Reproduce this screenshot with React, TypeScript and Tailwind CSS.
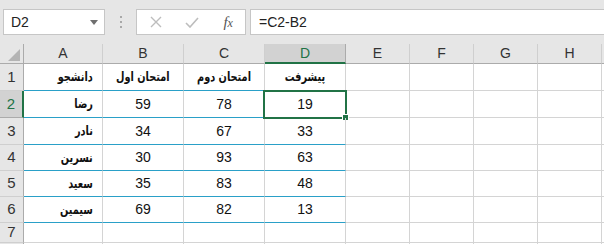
import React from 'react'

const cols = ['A', 'B', 'C', 'D', 'E', 'F', 'G', 'H']

const rows = [
  { n: 1, a: 'دانشجو', b: 'امتحان اول', c: 'امتحان دوم', d: 'پیشرفت', head: true },
  { n: 2, a: 'رضا', b: '59', c: '78', d: '19' },
  { n: 3, a: 'نادر', b: '34', c: '67', d: '33' },
  { n: 4, a: 'نسرین', b: '30', c: '93', d: '63' },
  { n: 5, a: 'سعید', b: '35', c: '83', d: '48' },
  { n: 6, a: 'سیمین', b: '69', c: '82', d: '13' },
]

// the screenshot's Persian face is much narrower than DejaVu, so squeeze it a bit
const arabic = "inline-block font-['DejaVu_Sans',sans-serif] font-bold text-[13px] scale-x-[0.75]"

function Toolbar() {
  return (
    <div className="h-[44px] bg-[#e6e6e6] flex items-start pt-[9px] pl-[3px]">
      {/* name box */}
      <div className="w-[102px] h-[26px] bg-white border border-[#c6c6c6] flex items-center justify-between pl-[7px] pr-[6px]">
        <span className="text-[14px] text-[#222]">D2</span>
        <svg width="8" height="5" viewBox="0 0 8 5">
          <path d="M0 0h8L4 5z" fill="#6f6f6f" />
        </svg>
      </div>
      <div className="w-[31px] h-[26px] flex flex-col items-center justify-center gap-[3px]">
        <div className="w-[2px] h-[2px] bg-[#a8a8a8]" />
        <div className="w-[2px] h-[2px] bg-[#a8a8a8]" />
        <div className="w-[2px] h-[2px] bg-[#a8a8a8]" />
      </div>
      {/* cancel / enter / fx */}
      <div className="w-[110px] h-[26px] bg-white border border-[#c6c6c6] flex items-center">
        <div className="w-[36px] flex justify-center ml-[1px]">
          <svg width="12" height="12" viewBox="0 0 12 12">
            <path d="M1 1l10 10M11 1L1 11" stroke="#bdbdbd" strokeWidth="1.4" />
          </svg>
        </div>
        <div className="w-[38px] flex justify-center">
          <svg width="14" height="11" viewBox="0 0 14 11">
            <path d="M1 6l4 4L13 1" stroke="#bdbdbd" strokeWidth="1.6" fill="none" />
          </svg>
        </div>
        <div className="w-[34px] flex justify-center">
          <span className="font-['Liberation_Serif',serif] italic text-[15px] text-[#555] leading-none">
            f<span className="text-[12px]">x</span>
          </span>
        </div>
      </div>
      {/* formula */}
      <div className="flex-1 ml-[4px] h-[26px] bg-white border border-[#c6c6c6] border-r-0 flex items-center pl-[8px]">
        <span className="text-[14px] text-[#222]">=C2-B2</span>
      </div>
    </div>
  )
}

function Cell({ children, className = '' }: { children?: React.ReactNode; className?: string }) {
  return (
    <div className={`border-r border-b border-[#d4d4d4] flex items-center justify-center text-[14px] text-[#111] ${className}`}>
      {children}
    </div>
  )
}

export default function App() {
  return (
    <div className="w-[604px] h-[244px] overflow-hidden bg-white font-['Liberation_Sans',sans-serif]">
      <Toolbar />
      <div className="grid grid-cols-[24px_79px_81px_81px_81px_64px_64px_64px_64px_1fr] grid-rows-[20px_27px_27px_27px_26px_26px_26px_20px_20px]">
        {/* header row */}
        <div className="relative bg-[#e6e6e6] border-r border-b border-[#ababab]">
          <svg className="absolute right-[3px] bottom-[2px]" width="12" height="12" viewBox="0 0 12 12">
            <path d="M12 0v12H0z" fill="#b4b4b4" />
          </svg>
        </div>
        {cols.map(c =>
          c === 'D' ? (
            <div key={c} className="bg-[#d2d2d2] border-r border-[#ababab] border-b-2 border-b-[#217346] flex items-center justify-center text-[14px] text-[#217346]">
              {c}
            </div>
          ) : (
            <div key={c} className="bg-[#e6e6e6] border-r border-b border-r-[#cfcfcf] border-b-[#ababab] flex items-center justify-center text-[14px] text-[#333]">
              {c}
            </div>
          )
        )}
        <div className="bg-[#e6e6e6] border-b border-[#ababab]" />

        {rows.map(r => (
          <React.Fragment key={r.n}>
            {r.n === 2 ? (
              <div className="bg-[#d2d2d2] border-b border-[#ababab] border-r-2 border-r-[#217346] flex items-center justify-center text-[15px] text-[#217346]">
                {r.n}
              </div>
            ) : (
              <div className="bg-[#e6e6e6] border-r border-b border-r-[#ababab] border-b-[#cfcfcf] flex items-center justify-center text-[15px] text-[#333]">
                {r.n}
              </div>
            )}
            <Cell className="!justify-end pr-[9px] border-b-[#2aa0c8]">
              <span dir="rtl" className={`${arabic} origin-right`}>{r.a}</span>
            </Cell>
            <Cell className="border-b-[#2aa0c8]">
              <span dir={r.head ? 'rtl' : undefined} className={r.head ? arabic : ''}>{r.b}</span>
            </Cell>
            <Cell className="border-b-[#2aa0c8]">
              <span dir={r.head ? 'rtl' : undefined} className={r.head ? arabic : ''}>{r.c}</span>
            </Cell>
            <Cell className="relative border-b-[#2aa0c8]">
              <span dir={r.head ? 'rtl' : undefined} className={r.head ? arabic : ''}>{r.d}</span>
              {r.n === 2 && (
                <>
                  <div className="absolute -left-[2px] -right-[2px] -top-[1px] -bottom-[2px] border-2 border-[#217346]" />
                  <div className="absolute -right-[4px] -bottom-[4px] w-[7px] h-[7px] bg-[#217346] border border-white" />
                </>
              )}
            </Cell>
            {[0, 1, 2, 3].map(i => <Cell key={i} />)}
            <div className="border-b border-[#d4d4d4]" />
          </React.Fragment>
        ))}

        <div className="bg-[#e6e6e6] border-r border-b border-r-[#ababab] border-b-[#cfcfcf] flex items-center justify-center text-[15px] text-[#333]">
          7
        </div>
        {cols.map(c => <Cell key={c} />)}
        <div className="border-b border-[#d4d4d4]" />

        <div className="bg-[#e6e6e6] border-r border-[#ababab]" />
        {cols.map(c => <div key={c} className="border-r border-[#d4d4d4]" />)}
        <div />
      </div>
    </div>
  )
}
